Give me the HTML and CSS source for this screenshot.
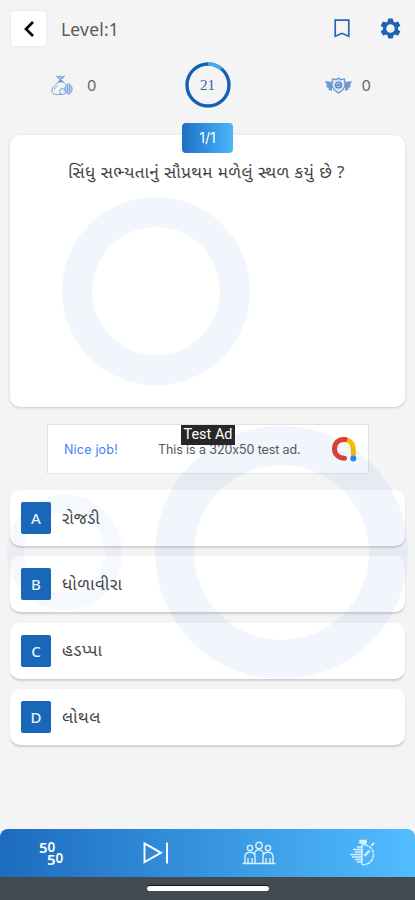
FILE: index.html
```html
<!DOCTYPE html>
<html lang="gu">
<head>
<meta charset="utf-8">
<meta name="viewport" content="width=device-width, initial-scale=1">
<title>Level 1</title>
<link rel="stylesheet" href="styles.css">
</head>
<body>
<div class="screen">
  <header class="topbar">
    <button class="back" aria-label="Back"><svg width="12" height="18" viewBox="0 0 12 18"><path d="M10 2 3 9l7 7" fill="none" stroke="#050505" stroke-width="2.7"/></svg></button>
    <h1 class="level">Level:1</h1>
    <svg class="bookmark" width="16" height="19" viewBox="0 0 16 19"><path d="M1.2 1.2h13.6v16L8 14.3l-6.8 2.900z" fill="none" stroke="#2566b5" stroke-width="1.7"/></svg>
    <svg class="gear" width="25" height="25" viewBox="0 0 24 24"><path fill="#1c63b5" d="M19.14 12.94c.04-.3.06-.61.06-.94s-.02-.64-.07-.94l2.03-1.58a.49.49 0 0 0 .12-.61l-1.92-3.32a.49.49 0 0 0-.59-.22l-2.39.96a7 7 0 0 0-1.62-.94l-.36-2.54a.48.48 0 0 0-.48-.41h-3.84a.48.48 0 0 0-.47.41l-.36 2.54c-.59.24-1.13.57-1.62.94l-2.39-.96a.49.49 0 0 0-.59.22L2.74 8.87a.48.48 0 0 0 .12.61l2.03 1.58a7 7 0 0 0 0 1.88l-2.03 1.58a.49.49 0 0 0-.12.61l1.92 3.32c.12.22.37.29.59.22l2.39-.96c.5.38 1.03.7 1.62.94l.36 2.54c.05.24.24.41.48.41h3.84c.24 0 .44-.17.47-.41l.36-2.54a7 7 0 0 0 1.62-.94l2.39.96c.22.08.47 0 .59-.22l1.92-3.32a.49.49 0 0 0-.12-.61zM12 16.1a4.1 4.1 0 1 1 0-8.2 4.1 4.1 0 0 1 0 8.2z"/></svg>
  </header>

  <section class="stats">
    <div class="stat coins">
      <svg width="22" height="22" viewBox="0 0 22 22" fill="none" stroke="#7ba0d8" stroke-width="1"><path d="M5.500 2 8 5h3l2.500-3-2.500 1-1.500-1.500L8 3z" fill="#a9c2e8"/><path d="M7 8c-1.500 3-6 4-6 9 0 2.500 2 3.500 5 3.500h5M12.500 8c1.500 2 3 2.500 4 3.500"/><path d="M3.500 15.500c.5-2 2-3 3-3.500"/><path d="M7 8l2.700-2.500L12.500 8z" fill="#5c8ad0"/><circle cx="11.500" cy="17.500" r="3" fill="#e4ecf8"/><ellipse cx="17.500" cy="15" rx="3.600" ry="5" fill="#bdd0ed"/><path d="M16.500 11.500v7M18.500 11.500v7"/></svg>
      <span>0</span>
    </div>
    <div class="timer">
      <svg width="48" height="48" viewBox="0 0 48 48"><circle cx="24" cy="24" r="21" fill="none" stroke="#1460b2" stroke-width="3.400"/><path d="M24 3a21 21 0 0 1 13.500 5" fill="none" stroke="#43a8f0" stroke-width="3.400"/></svg>
      <span>21</span>
    </div>
    <div class="stat score">
      <svg width="27" height="17" viewBox="0 0 27 17"><path fill="#6f9bd2" d="M0 4l7 1v9l-4-1.500 1-1-3-2 1-1zM27 4l-7 1v9l4-1.500-1-1 3-2-1-1z"/><path d="M13.500 1l2 1.500 4-.5.500 6c-.500 4-3 6-6.500 8-3.500-2-6-4-6.500-8l.5-6 4 .5z" fill="#dce7f5" stroke="#6593cd" stroke-width="1.200"/><circle cx="13.500" cy="8" r="3" fill="#a8c2e5" stroke="#4b7dc0" stroke-width="1.200"/><path d="M12 8h3" stroke="#2f68b3"/></svg>
      <span>0</span>
    </div>
  </section>

  <section class="question">
    <div class="count">1/1</div>
    <p class="prompt">સિંધુ સભ્યતાનું સૌપ્રથમ મળેલું સ્થળ કયું છે ?</p>
    <div class="halo"></div>
  </section>

  <aside class="ad">
    <span class="nice">Nice job!</span>
    <span class="copy">This is a 320x50 test ad.</span>
    <svg width="26" height="26" viewBox="0 0 26 26" fill="none" stroke-width="5" stroke-linecap="round"><path d="M13 3.500a9.500 9.500 0 0 1 9.300 9.500v6" stroke="#fabb05"/><path d="M14 3.500C7 2.700 3.500 8 3.500 13c0 5 4 9.200 10 9.200" stroke="#e33b2e"/><circle cx="22.300" cy="22.500" r="3" fill="#2684fc"/></svg>
    <span class="label">Test Ad</span>
  </aside>

  <main class="options">
    <div class="option"><b>A</b><span class="snug">રોજડી</span></div>
    <div class="option"><b>B</b><span>ધોળાવીરા</span></div>
    <div class="option"><b>C</b><span>હડપ્પા</span></div>
    <div class="option"><b>D</b><span>લોથલ</span></div>
  </main>

  <nav class="lifelines">
    <div class="fifty"><span>5<em>0</em></span><span>5<em>0</em></span></div>
    <div><svg width="26" height="24" viewBox="0 0 26 24" fill="none" stroke="#fff" stroke-width="1.900"><path d="M1.500 2.500v18.700L18 11.800zM24 1.500v21"/></svg></div>
    <div><svg width="34" height="24" viewBox="0 0 34 24" fill="none" stroke="#d8f1ff" stroke-width="1.400"><circle cx="17" cy="4.500" r="3.200"/><circle cx="8" cy="7" r="2.600"/><circle cx="26" cy="7" r="2.600"/><path d="M.5 22.500h33M3 22v-6c0-6 8-6 10-2v8M31 22v-6c0-6-8-6-10-2v8M12.500 14c0-7 9-7 9 0M6 22v-5M10 22v-5M24 22v-5M28 22v-5"/></svg></div>
    <div><svg width="28" height="28" viewBox="0 0 28 28" fill="none" stroke="#d8f1ff" stroke-width="1.500"><path d="M13 5.800V23M13 23.500v2.400"/><path d="M15 5.700c5 .5 9.500 4 9.500 9.800 0 5.500-4 10-10.500 10.200" stroke-dasharray="4 .8"/><path d="M11 1.500h6v2.400h-6z" fill="#d8f1ff"/><path d="M14 4v2M22.500 6.500 25 4M15.500 17l5-5.500" stroke-width="2.200"/><path d="M8 8h5M4 10.500h9M6 13h7M1 15.500h12M3 18h10M6 20.500h7M8 23h5" stroke-width="1.700"/></svg></div>
  </nav>
  <footer class="system"><i></i></footer>
  <div class="ring big"></div>
  <div class="ring small"></div>
</div>
</body>
</html>
```
FILE: styles.css
```css
* { box-sizing: border-box; }
body { margin: 0; font-family: "Noto Sans", "Noto Sans Gujarati", sans-serif; color: #555; }
.screen { position: relative; width: 415px; height: 900px; overflow: hidden; background: #f4f4f4; display: flex; flex-direction: column; }
.topbar { height: 57px; padding: 0 12px 0 11px; display: flex; align-items: center; flex: none; }
.back { width: 35px; height: 35px; padding: 0 0 0 1px; border: 0; border-radius: 3px; background: #fff; box-shadow: 0 0 2px #d8d8d8; display: flex; align-items: center; justify-content: center; }
.level { margin: 0 auto 0 15px; font-size: 17.500px; font-weight: 400; line-height: 24px; letter-spacing: .2px; color: #5a5a5a; }
.bookmark { margin-right: 28px; }
.stats { height: 78px; padding-bottom: 22px; display: grid; grid-template-columns: 1fr 48px 1fr; align-items: center; flex: none; }
.stat { display: flex; align-items: center; font-size: 15px; color: #666; }
.stat span { font-family: Inter, sans-serif; }
.coins { padding-left: 51px; gap: 14px; }
.score { justify-content: flex-end; padding-right: 44px; gap: 10px; }
.timer { display: grid; place-items: center; font-family: "Liberation Serif", serif; font-size: 15px; color: #3563ae; }
.timer > * { grid-area: 1 / 1; }
.question { height: 272px; margin: 0 10px; flex: none; background: #fff; border-radius: 10px; box-shadow: 0 1px 3px #c8c8c8; display: flex; flex-direction: column; }
.count { height: 30px; width: 51px; margin: -12px auto 0; border-radius: 4px; background: linear-gradient(90deg, #1f70c4, #4ab5fb); color: #fff; font: 14px/30px Inter, sans-serif; text-align: center; }
.prompt { margin: 5px 0 0 58px; font-size: 17px; line-height: 28px; letter-spacing: .46px; color: #444; white-space: nowrap; }
.halo { width: 188px; height: 188px; margin: 11px 0 0 52px; border: 30px solid #f0f6fc; border-radius: 50%; }
.ad { position: relative; width: 322px; height: 50px; margin: 17px 0 0 47px; padding: 0 11px 0 16px; flex: none; border: 1px solid #e2e2e2; background: #fff; display: flex; align-items: center; font-family: Inter, sans-serif; font-size: 12.500px; font-feature-settings: "calt" 0; color: #555; }
.nice { width: 94px; letter-spacing: .2px; color: #4282f3; }
.copy { flex: 1; letter-spacing: -.1px; white-space: nowrap; }
.label { position: absolute; z-index: 2; left: 133px; top: 0; width: 54px; height: 20px; background: #272727; color: #fff; font: 14.500px/20px Roboto, sans-serif; text-align: center; white-space: nowrap; }
.options { margin: 16px 10px 0; display: flex; flex-direction: column; gap: 10.400px; }
.option { height: 56px; padding-left: 11px; display: flex; align-items: center; gap: 11px; background: #fff; border-radius: 10px; box-shadow: 0 2px 2px #cfcfcf; font-size: 17px; letter-spacing: .5px; color: #444; }
.option .snug { font-size: 16.500px; letter-spacing: 0; }
.option b { position: relative; z-index: 2; width: 30px; height: 32px; border-radius: 2px; background: #1967b8; color: #e6f2ff; font: 500 15px/32px "Noto Sans", sans-serif; letter-spacing: 0; text-align: center; }
.lifelines { height: 48px; margin-top: auto; flex: none; border-radius: 8px 8px 0 0; background: linear-gradient(90deg, #1d6bbe, #51bdff); display: grid; grid-template-columns: repeat(4, 1fr); place-items: center; }
.lifelines svg { display: block; }
.fifty { display: flex; flex-direction: column; color: #fff; font: 600 15px/12px "Noto Sans", sans-serif; width: 26px; }
.fifty em { font-style: normal; font-size: 13.500px; }
.fifty span:first-child em { vertical-align: 1px; line-height: 1px; }
.fifty span:last-child em { vertical-align: 2px; line-height: 1px; }
.fifty span + span { padding-left: 8px; }
.system { height: 23px; flex: none; padding-top: 9px; background: #444b50; }
.system i { display: block; width: 122px; height: 5px; margin: 0 auto; border-radius: 3px; background: #fff; box-shadow: 0 -1px 1px #111; }
.ring { position: absolute; border-radius: 50%; border-style: solid; border-color: rgba(50, 130, 210, .07); pointer-events: none; }
.big { left: 155px; top: 426px; width: 253px; height: 253px; border-width: 39px; }
.small { left: 7px; top: 495px; width: 115px; height: 115px; border-width: 17px; border-color: rgba(50, 130, 210, .05); }
```
